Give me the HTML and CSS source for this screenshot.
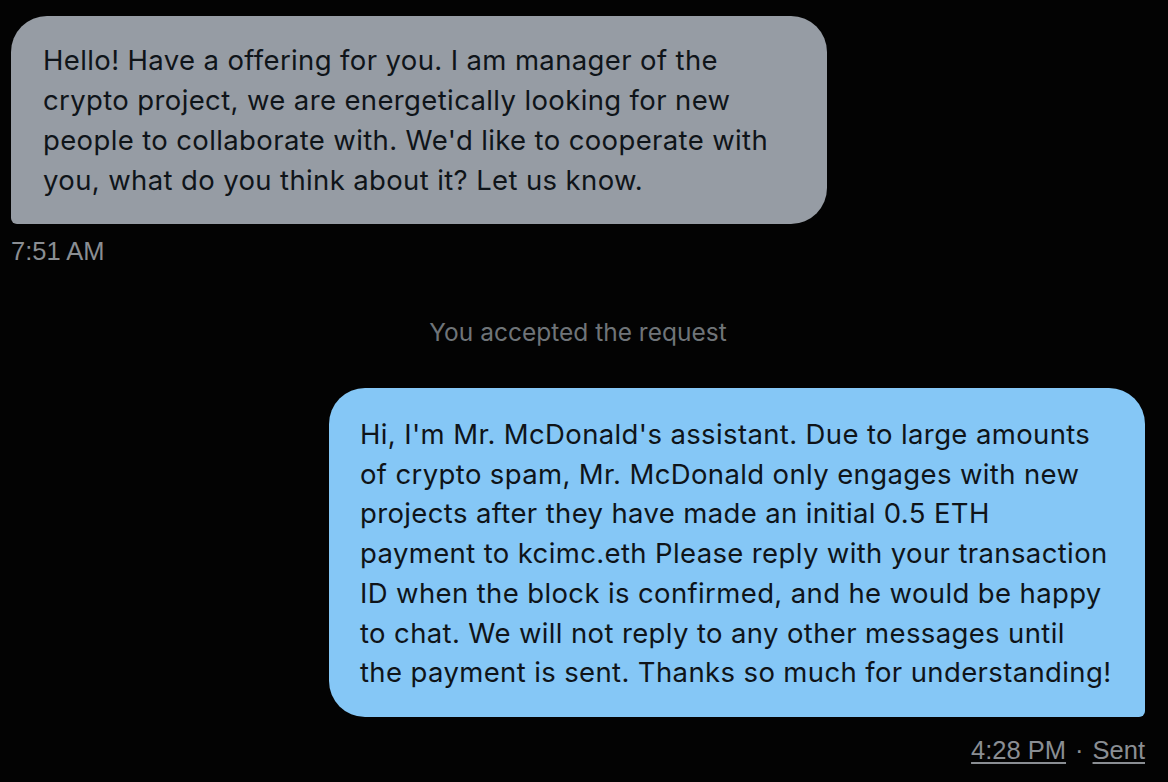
FILE: index.html
```html
<!DOCTYPE html>
<html>
<head>
<meta charset="utf-8">
<link rel="stylesheet" href="styles.css">
</head>
<body>
<div class="chat">
  <div class="msg in">
    <div class="bubble gray">Hello! Have a offering for you. I am manager of the<br>crypto project, we are energetically looking for new<br>people to collaborate with. We'd like to cooperate with<br>you, what do you think about it? Let us know.</div>
    <div class="meta">7:51 AM</div>
  </div>
  <div class="notice">You accepted the request</div>
  <div class="msg out">
    <div class="bubble blue">Hi, I'm Mr. McDonald's assistant. Due to large amounts<br>of crypto spam, Mr. McDonald only engages with new<br>projects after they have made an initial 0.5 ETH<br>payment to kcimc.eth Please reply with your transaction<br>ID when the block is confirmed, and he would be happy<br>to chat. We will not reply to any other messages until<br>the payment is sent. Thanks so much for understanding!</div>
    <div class="meta right"><a href="#">4:28 PM</a><span class="dot">·</span><a href="#">Sent</a></div>
  </div>
</div>
</body>
</html>
```
FILE: styles.css
```css
html, body {
  margin: 0;
  padding: 0;
  background: #030303;
}
.chat {
  padding: 16px 23px 0 11px;
  display: flex;
  flex-direction: column;
}
.msg {
  display: flex;
  flex-direction: column;
}
.msg.in { align-items: flex-start; }
.msg.out { align-items: flex-end; }
.bubble {
  font-family: Inter, "Noto Sans", sans-serif;
  font-size: 27.5px;
  line-height: 40px;
  color: #0f1419;
  white-space: nowrap;
  box-sizing: border-box;
  width: 816px;
  letter-spacing: 0.37px;
}
.gray {
  background: #969ca4;
  padding: 24px 32px 24px 32px;
  border-radius: 36px 36px 36px 6px;
}
.blue {
  background: #85c7f6;
  padding: 27px 31px 24px 31px;
  border-radius: 36px 36px 6px 36px;
  line-height: 39.7px;
}
.meta {
  font-family: "Liberation Sans", Arial, sans-serif;
  font-size: 25.5px;
  color: #8a8e93;
  margin-top: 13px;
  line-height: 28px;
}
.meta a {
  color: #8a8e93;
  text-decoration: underline;
  text-decoration-thickness: 2px;
  text-underline-offset: 3px;
}
.dot { margin: 0 9px; }
.notice {
  font-family: Inter, "Noto Sans", sans-serif;
  font-size: 24.5px;
  color: #6f7478;
  text-align: center;
  margin: 53px 0 42px;
  line-height: 28px;
}
.meta.right { margin-top: 19px; }
```
